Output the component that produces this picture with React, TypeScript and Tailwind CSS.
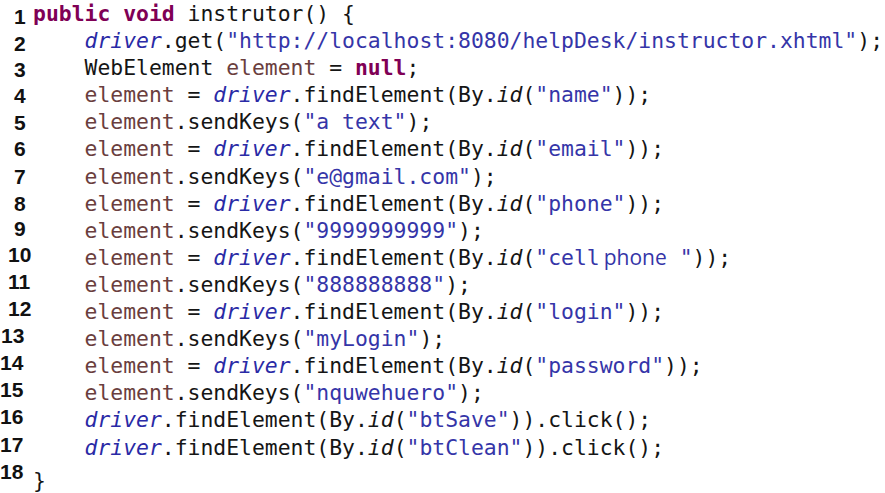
import React from "react";

type Tok = { t: string; c?: string };

const K = "text-[#7f0055] font-bold";
const D = "text-[#2a2aa6] italic";
const E = "text-[#6a3e3e]";
const S = "text-[#3535a8]";
const I = "italic";

const find = (id: Tok[]): Tok[] => [
  { t: "    " },
  { t: "element", c: E },
  { t: " = " },
  { t: "driver", c: D },
  { t: ".findElement(By." },
  { t: "id", c: I },
  { t: "(" },
  ...id,
  { t: "));" },
];
const send = (v: string): Tok[] => [
  { t: "    " },
  { t: "element", c: E },
  { t: ".sendKeys(" },
  { t: `"${v}"`, c: S },
  { t: ");" },
];
const click = (id: string): Tok[] => [
  { t: "    " },
  { t: "driver", c: D },
  { t: ".findElement(By." },
  { t: "id", c: I },
  { t: "(" },
  { t: `"${id}"`, c: S },
  { t: ")).click();" },
];

const lines: { n: string; pad: string; tokens: Tok[] }[] = [
  {
    n: "1",
    pad: "pl-[14px] pt-[6px]",
    tokens: [
      { t: "public", c: K },
      { t: " " },
      { t: "void", c: K },
      { t: " instrutor() {" },
    ],
  },
  {
    n: "2",
    pad: "pl-[14px] pt-[6px]",
    tokens: [
      { t: "    " },
      { t: "driver", c: D },
      { t: ".get(" },
      { t: '"http://localhost:8080/helpDesk/instructor.xhtml"', c: S },
      { t: ");" },
    ],
  },
  {
    n: "3",
    pad: "pl-[14px] pt-[5px]",
    tokens: [
      { t: "    WebElement " },
      { t: "element", c: E },
      { t: " = " },
      { t: "null", c: K },
      { t: ";" },
    ],
  },
  { n: "4", pad: "pl-[14px] pt-[4px]", tokens: find([{ t: '"name"', c: S }]) },
  { n: "5", pad: "pl-[14px] pt-[4px]", tokens: send("a text") },
  { n: "6", pad: "pl-[14px] pt-[3px]", tokens: find([{ t: '"email"', c: S }]) },
  { n: "7", pad: "pl-[14px] pt-[3px]", tokens: send("e@gmail.com") },
  { n: "8", pad: "pl-[14px] pt-[3px]", tokens: find([{ t: '"phone"', c: S }]) },
  { n: "9", pad: "pl-[14px] pt-[1px]", tokens: send("9999999999") },
  {
    n: "10",
    pad: "pl-[8px] pt-[0px]",
    tokens: find([
      { t: '"cell', c: S },
      { t: "phone", c: S + " ml-[4px] font-['Open_Sans',sans-serif] text-[21px]" },
      { t: ' "', c: S },
    ]),
  },
  { n: "11", pad: "pl-[8px] pt-[0px]", tokens: send("888888888") },
  { n: "12", pad: "pl-[8px] pt-[0px]", tokens: find([{ t: '"login"', c: S }]) },
  { n: "13", pad: "pl-[1px] pt-[0px]", tokens: send("myLogin") },
  { n: "14", pad: "pl-[0px] pt-[0px]", tokens: find([{ t: '"password"', c: S }]) },
  { n: "15", pad: "pl-[0px] pt-[0px]", tokens: send("nquwehuero") },
  { n: "16", pad: "pl-[0px] pt-[0px]", tokens: click("btSave") },
  { n: "17", pad: "pl-[0px] pt-[0px]", tokens: click("btClean") },
  { n: "18", pad: "pl-[0px] pt-[0px]", tokens: [{ t: "}" }] },
];

export default function App() {
  return (
    <div className="w-[885px] h-[493px] bg-white overflow-hidden">
      <div className="flex flex-col pt-[0px]">
        {lines.map((l) => (
          <div key={l.n} className="flex h-[27.1px] items-start">
            <div
              className={`w-[33px] shrink-0 h-[27px] leading-[22px] text-[21px] font-bold text-[#111] font-['Liberation_Sans',sans-serif] ${l.pad}`}
            >
              {l.n}
            </div>
            <div
              className={`whitespace-pre text-[21.4px] leading-[27px] text-[#151515] font-['DejaVu_Sans_Mono',monospace] ${
                l.n === "18" ? "pt-[6px]" : ""
              }`}
            >
              {l.tokens.map((tk, i) => (
                <span key={i} className={tk.c}>
                  {tk.t}
                </span>
              ))}
            </div>
          </div>
        ))}
      </div>
    </div>
  );
}
